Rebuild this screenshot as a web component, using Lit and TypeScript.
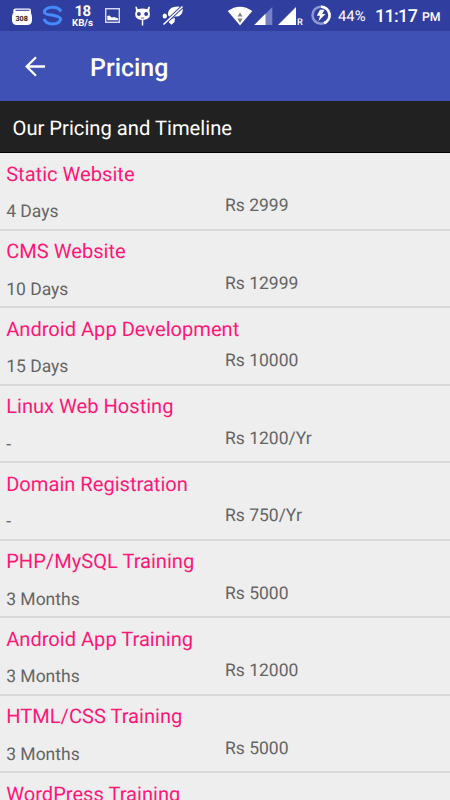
import { LitElement, html, css, svg } from "lit";
import { customElement, property } from "lit/decorators.js";

interface Plan {
  name: string;
  time: string;
  price: string;
}

const PLANS: Plan[] = [
  { name: "Static Website", time: "4 Days", price: "Rs 2999" },
  { name: "CMS Website", time: "10 Days", price: "Rs 12999" },
  { name: "Android App Development", time: "15 Days", price: "Rs 10000" },
  { name: "Linux Web Hosting", time: "-", price: "Rs 1200/Yr" },
  { name: "Domain Registration", time: "-", price: "Rs 750/Yr" },
  { name: "PHP/MySQL Training", time: "3 Months", price: "Rs 5000" },
  { name: "Android App Training", time: "3 Months", price: "Rs 12000" },
  { name: "HTML/CSS Training", time: "3 Months", price: "Rs 5000" },
  { name: "WordPress Training", time: "3 Months", price: "Rs 5000" },
];

@customElement("status-bar")
export class StatusBar extends LitElement {
  static styles = css`
    :host {
      display: flex;
      height: 31px;
      background: #303f9f;
      color: #fff;
      font-family: Roboto, sans-serif;
      overflow: hidden;
      white-space: nowrap;
      text-rendering: geometricPrecision;
    }
    svg {
      display: block;
      flex: none;
      height: 31px;
    }
    .left { width: 71px; }
    .speed {
      width: 23px;
      flex: none;
      display: flex;
      flex-direction: column;
      align-items: center;
      padding-top: 4px;
      box-sizing: border-box;
    }
    .num { font-size: 15px; line-height: 15px; font-weight: 700; letter-spacing: -0.5px; }
    .unit { font-size: 9.700px; line-height: 9px; font-weight: 700; }
    .notices { width: 100px; }
    .radios { width: 142px; margin-left: 2px; }
    .battery { width: 37px; font-size: 14.800px; line-height: 33px; flex: none; }
    .clock { font-size: 18px; line-height: 33px; font-weight: 500; letter-spacing: -0.700px; flex: none; width: 47px; }
    .half { font-size: 12.300px; line-height: 37px; font-weight: 500; }
  `;

  render() {
    return html`
      <svg class="left" viewBox="0 0 71 31">
        <path d="M13.300 13V10.500Q13.300 8.500 15.500 8.500H29Q31 8.500 31 10.500V13Z" fill="#fff" />
        <path d="M15.500 10.300H29.500" stroke="#303f9f" stroke-width="1.100" />
        <rect x="12" y="12" width="20" height="13" rx="4.500" fill="#fff" />
        <text x="21.700" y="21" text-anchor="middle" font-size="7.200" font-weight="700" fill="#222">308</text>
        <path d="M61 11.500C59.500 8.500 56.500 7.300 52.500 7.300C47.500 7.300 44.200 9.800 44.400 12.300C45 15.300 51 14.700 55 15.700C59 16.700 60.800 17.500 60.700 19.200C60 22 57 24 52.500 24C48.500 24 45.300 22.300 44 19"
          fill="none" stroke="#448aff" stroke-width="3" />
      </svg>
      <div class="speed"><span class="num">18</span><span class="unit">KB/s</span></div>
      <svg class="notices" viewBox="94 0 100 31">
        <rect x="105.700" y="8.700" width="13.600" height="13.600" fill="none" stroke="#d8dcf2" stroke-width="1.400" />
        <path d="M107.300 20.300V16L109.500 15.500L111.500 17.500L114.500 17L118 18.500V20.300Z" fill="#fff" />
        <path d="M135.300 6.700H136.800L137.800 9.200Q142.500 7.800 147.200 9.200L148.500 6.700H150L149.300 10.500Q150.500 14 149.500 17Q147 20 142.500 20Q138 20 135.700 17Q134.500 14 136 10.500Z" fill="#fff" />
        <path d="M142.500 19V25.500" stroke="#fff" stroke-width="1.500" />
        <circle cx="138.900" cy="14" r="1.900" fill="#303f9f" />
        <circle cx="146.100" cy="14" r="1.900" fill="#303f9f" />
        <path d="M141 18H144" stroke="#303f9f" stroke-width=".8" />
        <path d="M168 13Q169 8 174 7Q180 5.500 182.500 8Q183.500 12 180.500 15Q178.500 17 175 16.500Q171 20 168 15Z" fill="#fff" />
        <ellipse cx="164.800" cy="16" rx="2.200" ry="2.500" fill="#fff" />
        <path d="M170 19L175 18L174.500 22L171.500 24.800L168.500 22Z" fill="#fff" />
        <path d="M163.500 24.500L182.500 6.500" stroke="#303f9f" stroke-width="3.200" />
        <path d="M163.500 24.500L182.500 6.500" stroke="#fff" stroke-width="1.600" />
      </svg>
      <svg class="radios" viewBox="196 0 142 31">
        <path d="M227.700 11Q240 2.500 252.300 11L240 25.500Z" fill="#fff" />
        <path d="M240 12.500L242.500 16.500H237.500ZM237.500 18.500H242.500L240 23Z" fill="#7d7d7d" />
        <path d="M254.300 25L272.300 7V25Z" fill="#7580c5" />
        <path d="M254.300 25L265.500 13.800V25Z" fill="#fff" />
        <path d="M278 25L296 7V25Z" fill="#fff" />
        <text x="297" y="25" font-size="9.300" font-weight="500" fill="#fff">R</text>
        <circle cx="321" cy="15.200" r="8.500" fill="none" stroke="#8d97d2" stroke-width="2.600" />
        <path d="M321 6.700A8.500 8.500 0 0 1 324 23.200" fill="none" stroke="#fff" stroke-width="2.600" />
        <path d="M320 9.800L316.800 15.800H320L318.500 21L325.500 14H322.200L324.500 9.800Z" fill="#fff" />
      </svg>
      <span class="battery">44%</span><span class="clock">11:17</span><span class="half">PM</span>
    `;
  }
}

@customElement("plan-row")
export class PlanRow extends LitElement {
  @property({ attribute: false }) plan!: Plan;

  static styles = css`
    :host {
      display: grid;
      grid-template-columns: 218.800px 1fr;
      grid-template-rows: 37px 38px;
      box-sizing: border-box;
      height: 77.500px;
      padding-left: 6.200px;
      border-bottom: 2px solid #d9d9d9;
      font-family: Roboto, sans-serif;
      white-space: nowrap;
      text-rendering: geometricPrecision;
    }
    .name {
      grid-column: 1 / 3;
      font-size: 20.100px;
      line-height: 24px;
      padding-top: 8.500px;
      color: #ff1878;
    }
    .time, .price {
      font-size: 17.500px;
      line-height: 22px;
      color: #646464;
    }
    .time { padding-top: 11.400px; }
    .price { padding-top: 5px; }
  `;

  render() {
    return html`
      <div class="name">${this.plan.name}</div>
      <div class="time">${this.plan.time}</div>
      <div class="price">${this.plan.price}</div>
    `;
  }
}

@customElement("app-root")
export class AppRoot extends LitElement {
  static styles = css`
    :host {
      display: flex;
      flex-direction: column;
      height: 800px;
      overflow: hidden;
      background: #eee;
      font-family: Roboto, sans-serif;
      text-rendering: geometricPrecision;
    }
    status-bar, .bar, .heading { flex: none; }
    .bar {
      height: 70px;
      display: flex;
      align-items: center;
      background: #3f51b5;
      color: #fff;
    }
    .back { display: block; width: 90px; height: 70px; }
    .title { font-size: 24.900px; font-weight: 500; line-height: 30px; padding-top: 5px; }
    .heading {
      height: 52px;
      box-sizing: border-box;
      padding: 1px 0 0 12.500px;
      background: #212121;
      border-bottom: 1px solid #000;
      color: #fff;
      font-size: 20.200px;
      line-height: 52px;
    }
    .list { flex: 1; min-height: 0; overflow: hidden; }
  `;

  render() {
    return html`
      <status-bar></status-bar>
      <div class="bar">
        <svg class="back" viewBox="0 31 90 70">
          ${svg`<path d="M45 66.500H27M36 57.300L26.700 66.500L36 75.700" fill="none" stroke="#fff" stroke-width="2.300" />`}
        </svg>
        <div class="title">Pricing</div>
      </div>
      <div class="heading">Our Pricing and Timeline</div>
      <div class="list">${PLANS.map((p) => html`<plan-row .plan=${p}></plan-row>`)}</div>
    `;
  }
}
